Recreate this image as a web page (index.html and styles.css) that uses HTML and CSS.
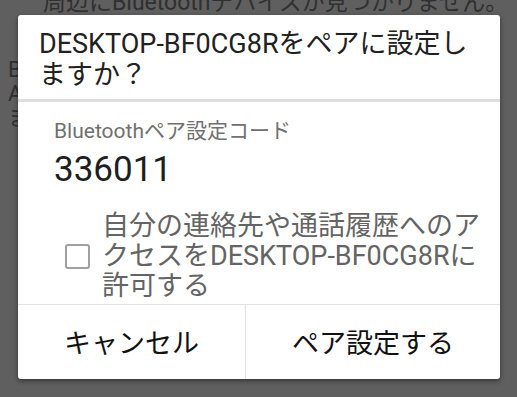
FILE: index.html
```html
<!DOCTYPE html>
<html lang="ja">
<head>
<meta charset="utf-8">
<link rel="stylesheet" href="styles.css">
</head>
<body>
<div class="page">
  <p class="bg-head">周辺にBluetoothデバイスが見つかりません。</p>
  <div class="side">
    <p class="bg-text">Bluetooth</p>
    <p class="bg-text">Android</p>
    <p class="bg-text">ますか</p>
  </div>
</div>
<div class="dialog">
  <div class="title">DESKTOP-BF0CG8Rをペアに設定しますか？</div>
  <div class="content">
    <div class="label">Bluetoothペア設定コード</div>
    <div class="code">336011</div>
    <div class="check-row">
      <span class="checkbox"></span>
      <span class="check-text">自分の連絡先や通話履歴へのアクセスをDESKTOP-BF0CG8Rに許可する</span>
    </div>
  </div>
  <div class="actions">
    <div class="btn btn-left">キャンセル</div>
    <div class="btn btn-right">ペア設定する</div>
  </div>
</div>
</body>
</html>
```

FILE: styles.css
```css
html, body {
  margin: 0;
  padding: 0;
}
body {
  width: 517px;
  height: 397px;
  overflow: hidden;
  background: #5f5f5f;
  font-family: Roboto, "Noto Sans CJK JP", sans-serif;
  position: relative;
}
.page {
  width: 517px;
  height: 397px;
  overflow: hidden;
}
.page p {
  margin: 0;
  color: #303030;
  white-space: nowrap;
}
.bg-head {
  font-size: 23px;
  line-height: 22px;
  margin-top: -8px !important;
  padding-left: 43px;
}
.side {
  width: 18px;
  overflow: hidden;
  margin-top: 44px;
  padding-left: 8px;
  box-sizing: border-box;
}
.bg-text {
  font-size: 22px;
  line-height: 24px;
}
.dialog {
  position: absolute;
  left: 18px;
  top: 15px;
  width: 482px;
  height: 364px;
  background: #fff;
  border-radius: 3px;
  box-shadow: 0 2px 5px rgba(0, 0, 0, 0.45);
  display: flex;
  flex-direction: column;
}
.title {
  padding: 14px 20px 8px 21px;
  font-size: 27px;
  line-height: 31px;
  color: #212121;
  border-bottom: 3px solid #dedede;
}
.content {
  flex: 1;
  padding: 17px 10px 0 36px;
}
.label {
  font-size: 21px;
  line-height: 24px;
  color: #707070;
}
.code {
  margin-top: 7px;
  font-size: 35px;
  line-height: 40px;
  color: #1e1e1e;
}
.check-row {
  margin-top: 21px;
  display: flex;
  align-items: center;
}
.checkbox {
  flex: none;
  width: 21px;
  height: 21px;
  border: 2.5px solid #a0a0a0;
  border-radius: 3px;
  margin-left: 11px;
  margin-right: 12px;
}
.check-text {
  font-size: 27px;
  line-height: 30px;
  color: #646464;
}
.actions {
  height: 74px;
  border-top: 1px solid #e2e2e2;
  display: flex;
}
.btn {
  flex: 1;
  display: flex;
  align-items: center;
  justify-content: center;
  font-size: 27px;
  color: #111;
  padding-bottom: 2px;
}
.btn-left {
  flex: 0 0 227px;
}
.btn-right {
  border-left: 1px solid #e2e2e2;
}
```
